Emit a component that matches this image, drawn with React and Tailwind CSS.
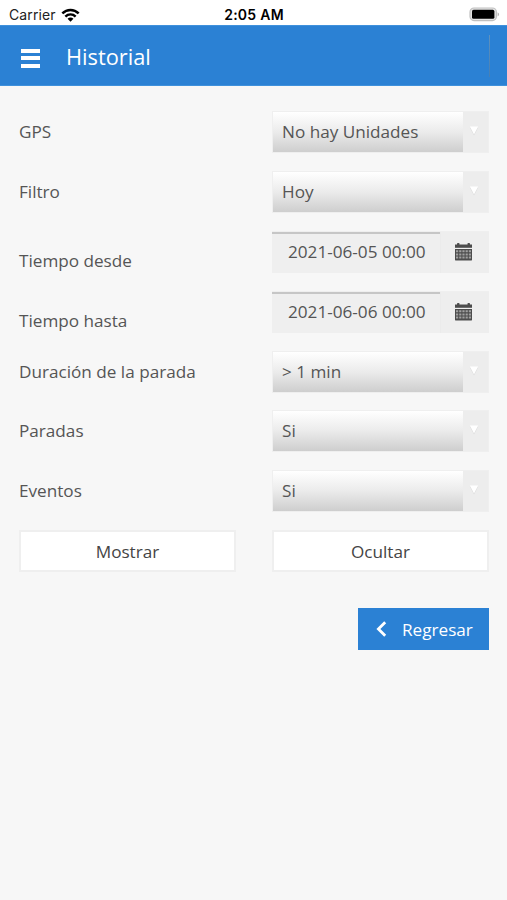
const fields = [
  { label: 'GPS', type: 'select', value: 'No hay Unidades' },
  { label: 'Filtro', type: 'select', value: 'Hoy' },
  { label: 'Tiempo desde', type: 'date', value: '2021-06-05 00:00' },
  { label: 'Tiempo hasta', type: 'date', value: '2021-06-06 00:00' },
  { label: 'Duración de la parada', type: 'select', value: '> 1 min' },
  { label: 'Paradas', type: 'select', value: 'Si' },
  { label: 'Eventos', type: 'select', value: 'Si' },
]

function WifiIcon() {
  return (
    <svg width="19" height="14" viewBox="0 0 20 14" className="mb-px ml-[5px]" fill="none" stroke="#000" strokeWidth="2.6">
      <path d="M1.4 5.3 C6.3 0.4 13.7 0.4 18.6 5.3" />
      <path d="M4.6 8.6 C7.7 5.6 12.3 5.6 15.4 8.6" />
      <path d="M10 14 L6.9 10.9 C8.6 9.2 11.4 9.2 13.1 10.9 Z" fill="#000" stroke="none" />
    </svg>
  )
}

function BatteryIcon() {
  return (
    <svg width="31" height="15" viewBox="0 0 31 15">
      <rect x="1" y="1" width="26.4" height="12.6" rx="4" fill="#e4e4e4" stroke="#c0c0c0" strokeWidth="1.2" />
      <rect x="3" y="2.8" width="22.4" height="9" rx="1.6" fill="#000" />
      <path d="M28.6 5.2 C30.6 6 30.6 8.6 28.6 9.4 Z" fill="#b5b5b5" />
    </svg>
  )
}

function CalendarIcon() {
  return (
    <svg width="17" height="18" viewBox="0 0 17 18" fill="#4c4c4c">
      <rect x="2" y="0" width="2.5" height="3" rx="0.8" />
      <rect x="12.5" y="0" width="2.5" height="3" rx="0.8" />
      <path d="M0 1.5 H17 V4.8 H0 Z" />
      <path d="M0 6 H17 V16.4 Q17 17.6 15.8 17.6 H1.2 Q0 17.6 0 16.4 Z" />
      <g stroke="#a0a0a0" strokeWidth="2" strokeDasharray="2.2 1">
        <path d="M1 8.2 H16" />
        <path d="M1 11.4 H16" />
        <path d="M1 14.6 H16" />
      </g>
    </svg>
  )
}

function SelectField({ value }) {
  return (
    <div className="flex h-[42px] w-[217px] border border-[#efefef] bg-[#ededed]">
      <div className="flex w-[190px] items-center bg-linear-to-b from-white via-[#ebebeb] to-[#cecece] pl-[9px]">
        {value}
      </div>
      <div className="flex flex-1 justify-center pt-[14px] pr-[3px]">
        <svg width="10" height="10" viewBox="0 0 10 10">
          <path d="M0.8 1.6 H9.2 L5 9.4 Z" fill="#dadada" />
          <path d="M0.8 0.6 H9.2 L5 8.4 Z" fill="#fff" />
        </svg>
      </div>
    </div>
  )
}

function DateField({ value }) {
  return (
    <div className="flex h-[42px] w-[217px] border-t border-[#efefef] bg-[#efefef]">
      <div className="w-[168px] border-t-2 border-[#c6c6c6] pt-[6px] pl-4 whitespace-nowrap">{value}</div>
      <div className="flex flex-1 items-start border-l border-[#ebebeb] bg-[#eeeeee] pt-[11px] pl-[14px]">
        <CalendarIcon />
      </div>
    </div>
  )
}

export default function App() {
  return (
    <div className="flex h-[900px] w-[507px] flex-col overflow-hidden bg-[#f7f7f7] font-['Open_Sans',sans-serif] text-[17.15px] leading-6 text-[#555]">
      {/* Phone status bar */}
      <div className="grid h-[25px] shrink-0 grid-cols-3 items-center bg-white pt-[3px] pr-[7px] pl-[9px] font-['Inter',sans-serif] text-black">
        <div className="flex items-center text-[14px]">
          <span className="tracking-[0.1px] text-[#222]">Carrier</span>
          <WifiIcon />
        </div>
        <div className="pr-px text-center text-[14px] font-semibold tracking-[0.25px]">2:05 AM</div>
        <div className="flex justify-end pb-px">
          <BatteryIcon />
        </div>
      </div>

      <header className="flex h-[61px] shrink-0 items-center border-y border-[#3f91dc] bg-[#2b81d4] pr-[17px] pl-[21px] text-white">
        <div className="mt-[5px] flex w-[19px] flex-col gap-[3.5px]">
          <span className="h-1 bg-white" />
          <span className="h-1 bg-white" />
          <span className="h-1 bg-white" />
        </div>
        <h1 className="mt-[3px] ml-[26px] text-[21.8px] leading-8">Historial</h1>
        <div className="ml-auto h-[42px] w-px bg-linear-to-b from-[#5f92bf] to-[#467fb4]" />
      </header>

      <main className="pt-[25px] pr-[18px] pl-[19px]">
        <div className="flex flex-col gap-[17.9px]">
          {fields.map(field => (
            <div key={field.label} className="flex h-[42px] items-center justify-between">
              <span className={field.type === 'date' ? 'pt-[19px]' : ''}>{field.label}</span>
              {field.type === 'date' ? <DateField value={field.value} /> : <SelectField value={field.value} />}
            </div>
          ))}
        </div>

        <div className="mt-[17.6px] flex justify-between text-[#444]">
          <button className="h-[42px] w-[217px] border-2 border-[#efefef] bg-white pt-[2px]">Mostrar</button>
          <button className="h-[42px] w-[217px] border-2 border-[#efefef] bg-white pt-[2px]">Ocultar</button>
        </div>

        <div className="mt-9 flex justify-end">
          <button className="flex h-[42px] w-[131px] items-center bg-[#2b81d4] pl-[18px] text-white">
            <svg width="11" height="16" viewBox="0 0 11 16" fill="none" stroke="#fff" strokeWidth="2.8">
              <path d="M9.2 1.2 L2.4 8 L9.2 14.8" />
            </svg>
            <span className="mt-[2px] ml-[15px]">Regresar</span>
          </button>
        </div>
      </main>
    </div>
  )
}
